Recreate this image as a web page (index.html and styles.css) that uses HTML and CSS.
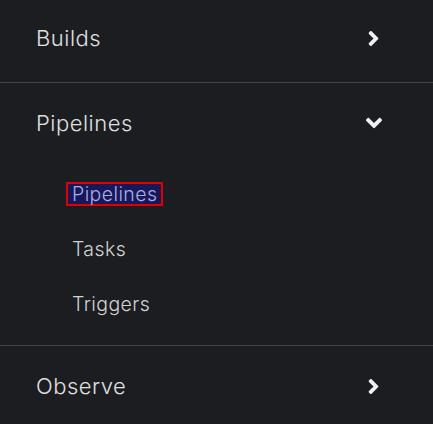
FILE: index.html
```html
<!DOCTYPE html>
<html>
<head>
<meta charset="utf-8">
<link rel="stylesheet" href="styles.css">
</head>
<body>
<nav class="nav">
  <div class="section">
    <div class="row">
      <span class="label">Builds</span>
      <svg class="chev-right" viewBox="25 96 206 320"><path d="M224.3 273l-136 136c-9.4 9.4-24.6 9.4-33.9 0l-22.6-22.6c-9.4-9.4-9.4-24.6 0-33.9l96.4-96.4-96.4-96.4c-9.4-9.4-9.4-24.6 0-33.9L54.3 103c9.4-9.4 24.6-9.4 33.9 0l136 136c9.5 9.4 9.5 24.6.1 34z" fill="currentColor"/></svg>
    </div>
  </div>
  <div class="section">
    <div class="row">
      <span class="label">Pipelines</span>
      <svg class="chev-down" viewBox="0 0 320 512"><path d="M143 352.3L7 216.3c-9.4-9.4-9.4-24.6 0-33.9l22.6-22.6c9.4-9.4 24.6-9.4 33.9 0l96.4 96.4 96.4-96.4c9.4-9.4 24.6-9.4 33.9 0l22.6 22.6c9.4 9.4 9.4 24.6 0 33.9l-136 136c-9.2 9.4-24.4 9.4-33.8 0z" fill="currentColor"/></svg>
    </div>
    <ul class="sub">
      <li class="sub-item"><span class="sub-link active">Pipelines</span></li>
      <li class="sub-item"><span class="sub-link">Tasks</span></li>
      <li class="sub-item"><span class="sub-link">Triggers</span></li>
    </ul>
  </div>
  <div class="section">
    <div class="row">
      <span class="label">Observe</span>
      <svg class="chev-right" viewBox="25 96 206 320"><path d="M224.3 273l-136 136c-9.4 9.4-24.6 9.4-33.9 0l-22.6-22.6c-9.4-9.4-9.4-24.6 0-33.9l96.4-96.4-96.4-96.4c-9.4-9.4-9.4-24.6 0-33.9L54.3 103c9.4-9.4 24.6-9.4 33.9 0l136 136c9.5 9.4 9.5 24.6.1 34z" fill="currentColor"/></svg>
    </div>
  </div>
</nav>
</body>
</html>
```

FILE: styles.css
```css
html, body {
  margin: 0;
  padding: 0;
  background: #1b1d21;
  height: 100%;
  overflow: hidden;
}
.nav {
  font-family: Inter, "Noto Sans", sans-serif;
  font-weight: 300;
  color: #e0e0e0;
  display: flex;
  flex-direction: column;
  margin-top: -2px;
}
.section {
  border-bottom: 1px solid #444548;
  padding-bottom: 4px;
}
.section:last-child {
  border-bottom: none;
}
.row {
  height: 80px;
  display: flex;
  align-items: center;
  justify-content: space-between;
  padding: 0 54px 0 36px;
}
.label {
  font-size: 22px;
  letter-spacing: 0.5px;
  line-height: 1;
}
.chev-right {
  width: 11px;
  height: 15px;
  color: #f0f0f0;
}
.chev-down {
  width: 16px;
  height: 26px;
  color: #f0f0f0;
  margin-right: -3px;
}
.sub {
  list-style: none;
  margin: 0;
  padding: 3px 0 10px 0;
}
.sub-item {
  height: 55px;
  display: flex;
  align-items: center;
  padding-left: 68px;
}
.sub-link {
  font-size: 19.5px;
  letter-spacing: 0.4px;
  line-height: 20px;
  color: #d2d2d2;
  padding: 0 4px;
  border: 2px solid transparent;
  margin-left: -2px;
}
.sub-link.active {
  background: #181858;
  color: #a8ade8;
  border-color: #e00000;
}
```
